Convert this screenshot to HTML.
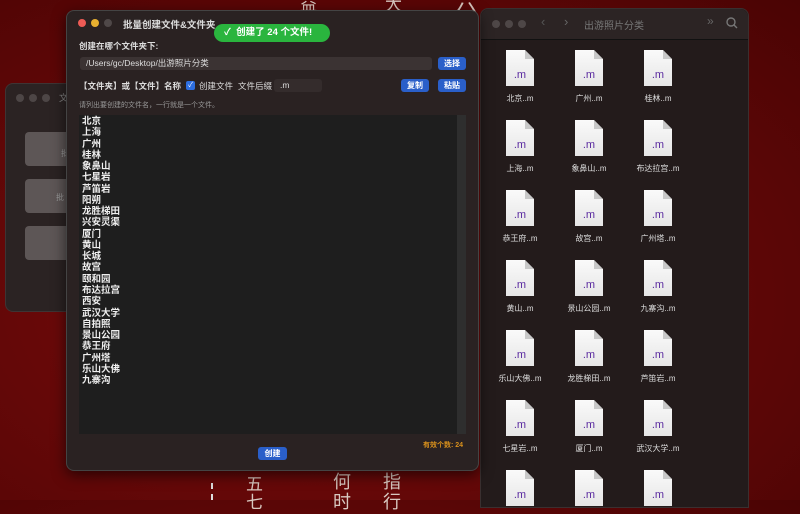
<!DOCTYPE html>
<html><head><meta charset="utf-8"><style>
*{margin:0;padding:0;box-sizing:border-box}
body{width:800px;height:500px;overflow:hidden;position:relative;background:radial-gradient(ellipse at 40% 60%,#7a0c0c,#5a0606 70%,#4a0404);font-family:"Liberation Sans","Noto Sans CJK SC",sans-serif;color:#ddd}
.a{position:absolute}
.dot{position:absolute;width:8px;height:8px;border-radius:50%}
.bg{color:#d8c8c0;font-size:17px;font-family:"Noto Sans CJK SC",sans-serif}
.btn{position:absolute;background:#2a5fc9;color:#fff;font-size:8px;font-weight:bold;border-radius:3px;text-align:center;line-height:13px;height:13px}
.doc{position:absolute;width:28px;height:36px;background:linear-gradient(#fafafa,#e6e6e6);clip-path:polygon(0 0,19px 0,28px 9px,28px 36px,0 36px)}
.doc:after{content:"";position:absolute;right:0;top:0;width:9px;height:9px;background:#c8c8c8;clip-path:polygon(0 0,0 100%,100% 100%)}
.doc span{position:absolute;left:0;right:0;top:19px;text-align:center;color:#5a2aa0;font-size:11px}
.lbl{position:absolute;width:70px;text-align:center;font-size:8px;color:#ddd}
</style></head><body>
<div class="a bg" style="left:300px;top:-10px">益</div>
<div class="a bg" style="left:385px;top:-10px">大</div>
<div class="a bg" style="left:455px;top:-14px;font-size:22px">六</div>
<div class="a bg" style="left:246px;top:470px">五</div>
<div class="a bg" style="left:246px;top:488px">七</div>
<div class="a bg" style="left:333px;top:468px;font-size:18px">何</div>
<div class="a bg" style="left:333px;top:488px;font-size:18px">时</div>
<div class="a bg" style="left:383px;top:468px;font-size:18px">指</div>
<div class="a bg" style="left:383px;top:488px;font-size:18px">行</div>
<div class="a" style="left:211px;top:483px;width:2px;height:17px;border-left:2px dashed #ddd"></div>

<!-- left window -->
<div class="a" style="left:5px;top:83px;width:90px;height:229px;background:#2b2323;border-radius:8px;border:1px solid #3e3434"></div>
<div class="dot" style="left:16px;top:94px;background:#4d4646"></div>
<div class="dot" style="left:29px;top:94px;background:#4d4646"></div>
<div class="dot" style="left:42px;top:94px;background:#4d4646"></div>
<div class="a" style="left:59px;top:91px;font-size:9px;color:#888">文</div>
<div class="a" style="left:25px;top:132px;width:50px;height:34px;background:#5d5656;border-radius:4px"></div>
<div class="a" style="left:25px;top:179px;width:50px;height:34px;background:#5d5656;border-radius:4px"></div>
<div class="a" style="left:25px;top:226px;width:50px;height:34px;background:#5d5656;border-radius:4px"></div>
<div class="a" style="left:61px;top:148px;font-size:8px;color:#999">批</div>
<div class="a" style="left:56px;top:192px;font-size:8px;color:#999">批</div>

<!-- finder -->
<div class="a" style="left:480px;top:8px;width:269px;height:500px;background:#231b1b;border-radius:8px 8px 0 0;border:1px solid #3a3030"></div>
<div class="a" style="left:481px;top:9px;width:267px;height:31px;background:#2c2424;border-bottom:1px solid #111;border-radius:8px 8px 0 0"></div>
<div class="dot" style="left:492px;top:20px;background:#4e4747"></div>
<div class="dot" style="left:505px;top:20px;background:#4e4747"></div>
<div class="dot" style="left:518px;top:20px;background:#4e4747"></div>
<div class="a" style="left:541px;top:14px;font-size:13px;color:#555">‹</div>
<div class="a" style="left:564px;top:14px;font-size:13px;color:#666">›</div>
<div class="a" style="left:584px;top:17px;font-size:10px;color:#777">出游照片分类</div>
<div class="a" style="left:707px;top:14px;font-size:12px;color:#666">»</div>
<svg class="a" style="left:726px;top:17px" width="12" height="12"><circle cx="5" cy="5" r="4" stroke="#777" stroke-width="1.4" fill="none"/><line x1="8" y1="8" x2="11" y2="11" stroke="#777" stroke-width="1.4"/></svg>
<div id="grid"></div>

<!-- main window -->
<div class="a" style="left:66px;top:10px;width:413px;height:461px;background:#2a2222;border-radius:8px;border:1px solid #444;box-shadow:0 4px 14px rgba(0,0,0,.6)"></div>
<div class="dot" style="left:78px;top:19px;background:#ee5b55"></div>
<div class="dot" style="left:91px;top:19px;background:#e8b030"></div>
<div class="dot" style="left:104px;top:19px;background:#4f4848"></div>
<div class="a" style="left:123px;top:17px;font-size:9.5px;font-weight:bold;color:#ddd">批量创建文件&amp;文件夹</div>
<div class="a" style="left:214px;top:24px;width:116px;height:18px;background:#2ab53e;border-radius:9px;color:#fff;font-size:9.5px;font-weight:bold;line-height:18px;padding-left:10px">✓ &nbsp;创建了 24 个文件!</div>
<div class="a" style="left:79px;top:40px;font-size:8.5px;font-weight:bold">创建在哪个文件夹下:</div>
<div class="a" style="left:80px;top:57px;width:352px;height:13px;background:#3b3333;border-radius:3px;font-size:8.5px;line-height:13px;padding-left:6px;color:#ddd">/Users/gc/Desktop/出游照片分类</div>
<div class="btn" style="left:438px;top:57px;width:28px">选择</div>
<div class="a" style="left:79px;top:80px;font-size:8.5px;font-weight:bold">【文件夹】或【文件】名称</div>
<div class="a" style="left:186px;top:81px;width:9px;height:9px;background:#2d6ee0;border-radius:2px;color:#fff;font-size:7px;line-height:9px;text-align:center">✓</div>
<div class="a" style="left:199px;top:80px;font-size:8.5px">创建文件</div>
<div class="a" style="left:238px;top:80px;font-size:8.5px">文件后缀</div>
<div class="a" style="left:274px;top:79px;width:48px;height:13px;background:#342c2c;border-radius:3px;font-size:8.5px;line-height:13px;padding-left:6px">.m</div>
<div class="btn" style="left:401px;top:79px;width:28px">复制</div>
<div class="btn" style="left:438px;top:79px;width:28px">粘贴</div>
<div class="a" style="left:79px;top:100px;font-size:7px;color:#999">请列出要创建的文件名，一行就是一个文件。</div>
<div class="a" style="left:79px;top:115px;width:387px;height:319px;background:#1e1e1e"></div>
<div class="a" style="left:457px;top:115px;width:9px;height:319px;background:#2e2e2e"></div>
<div class="a" style="left:82px;top:116px;font-size:9.5px;font-weight:bold;line-height:11.26px;color:#eee">北京<br>上海<br>广州<br>桂林<br>象鼻山<br>七星岩<br>芦笛岩<br>阳朔<br>龙胜梯田<br>兴安灵渠<br>厦门<br>黄山<br>长城<br>故宫<br>颐和园<br>布达拉宫<br>西安<br>武汉大学<br>自拍照<br>景山公园<br>恭王府<br>广州塔<br>乐山大佛<br>九寨沟</div>
<div class="a" style="left:423px;top:440px;font-size:7px;font-weight:bold;color:#d8901c">有效个数: 24</div>
<div class="btn" style="left:258px;top:447px;width:29px">创建</div>

<script>
var n=[["北京..m","广州..m","桂林..m"],["上海..m","象鼻山..m","布达拉宫..m"],["恭王府..m","故宫..m","广州塔..m"],["黄山..m","景山公园..m","九寨沟..m"],["乐山大佛..m","龙胜梯田..m","芦笛岩..m"],["七星岩..m","厦门..m","武汉大学..m"],["","",""]];
var h="",xs=[506,575,644];
for(var r=0;r<7;r++)for(var c=0;c<3;c++){var y=50+r*70,x=xs[c];
h+='<div class="doc" style="left:'+x+'px;top:'+y+'px"><span>.m</span></div>';
if(n[r][c])h+='<div class="lbl" style="left:'+(x-21)+'px;top:'+(y+43)+'px">'+n[r][c]+'</div>';}
document.getElementById("grid").innerHTML=h;
</script>
</body></html>
